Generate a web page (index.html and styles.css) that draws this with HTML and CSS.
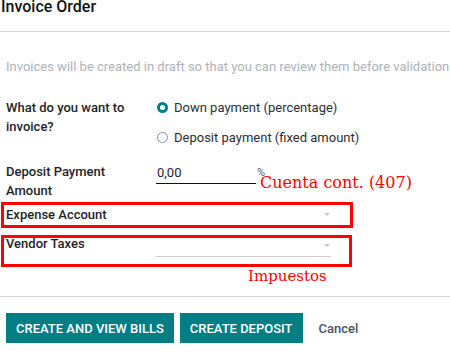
FILE: index.html
```html
<!DOCTYPE html>
<html lang="en">
<head>
  <meta charset="UTF-8" />
  <meta name="viewport" content="width=device-width, initial-scale=1.0" />
  <title>Invoice Order</title>
  <link rel="stylesheet" href="styles.css">
</head>
<body>
  <div class="dialog">
    <header class="head">
      <h4>Invoice Order</h4>
    </header>

    <div class="content">
      <p class="note">Invoices will be created in draft so that you can review them before validation</p>

      <div class="row row-method">
        <div class="label">What do you want to invoice?</div>
        <div class="value radios">
          <div class="radio checked"><span class="dot"></span>Down payment (percentage)</div>
          <div class="radio"><span class="dot"></span>Deposit payment (fixed amount)</div>
        </div>
      </div>

      <div class="row row-amount">
        <div class="label">Deposit Payment Amount</div>
        <div class="value">
          <div class="input amount">0,00</div>
          <span class="unit">%</span>
        </div>
      </div>

      <div class="row row-account">
        <div class="label">Expense Account</div>
        <div class="value">
          <div class="select plain"><span class="caret"></span></div>
        </div>
      </div>

      <div class="row row-taxes">
        <div class="label">Vendor Taxes</div>
        <div class="value">
          <div class="select lined"><span class="caret"></span></div>
        </div>
      </div>
    </div>

    <footer class="foot">
      <button class="btn primary">Create and View Bills</button>
      <button class="btn primary">Create Deposit</button>
      <button class="btn link">Cancel</button>
    </footer>

    <!-- annotations drawn over the screenshot -->
    <div class="mark box-account"></div>
    <div class="mark box-taxes"></div>
    <div class="note-red note-account">Cuenta cont. (407)</div>
    <div class="note-red note-taxes">Impuestos</div>
  </div>
</body>
</html>
```

FILE: styles.css
```css
body {
  margin: 0;
  font-family: 'Roboto', sans-serif;
  font-size: 13px;
  color: #212529;
  background: #fff;
}
.dialog {
  position: relative;
  width: 450px;
  height: 355px;
  overflow: hidden;
}
.head {
  display: flow-root;
  height: 31px;
  border-bottom: 1px solid #d5d8de;
}
.head h4 {
  margin: -3px 0 0 1px;
  font-size: 16px;
  font-weight: 500;
  line-height: 19px;
  color: #111;
}
.content {
  height: 239px;
  padding-top: 25px;
}
.note {
  margin: 0 0 22px 6px;
  line-height: 19px;
  color: #aeb2b8;
  white-space: nowrap;
}
.row {
  display: flex;
  line-height: 19px;
}
.label {
  box-sizing: border-box;
  width: 156px;
  padding: 0 16px 0 6px;
  font-weight: 500;
  color: #1f2328;
}
.value {
  display: flex;
  align-items: flex-start;
}
.radios {
  flex-direction: column;
  padding-left: 1px;
}
.radio {
  display: flex;
  align-items: center;
  margin-bottom: 11px;
  color: #2b2f33;
}
.radio:last-child {
  margin-bottom: 0;
}
.dot {
  box-sizing: border-box;
  width: 11px;
  height: 11px;
  margin-right: 6px;
  border: 1px solid #8a8f95;
  border-radius: 50%;
  background: #fff;
}
.radio.checked .dot {
  border: 3.5px solid #017e84;
}
.row-amount {
  margin-top: 15px;
}
.input {
  padding: 1px 0 1px 1px;
  line-height: 19px;
  border-bottom: 1px solid #111;
  color: #1f2328;
}
.amount {
  width: 99px;
}
.unit {
  margin-left: 1px;
  font-size: 11px;
  line-height: 12px;
  color: #555b66;
  padding-top: 5px;
}
.row-account {
  margin-top: 5px;
}
.row-taxes {
  margin-top: 10px;
}
.select {
  display: flex;
  justify-content: flex-end;
  align-items: center;
  width: 175px;
  height: 19px;
}
.select.lined {
  padding-bottom: 3px;
  border-bottom: 1px solid #c9ccd1;
}
.select.lined .caret {
  margin-bottom: -3px;
  align-self: center;
}
.caret {
  width: 0;
  height: 0;
  margin-right: 1px;
  border-left: 3px solid transparent;
  border-right: 3px solid transparent;
  border-top: 3px solid #c4c6ca;
}
.foot {
  display: flex;
  gap: 6px;
  padding: 16px 0 0 6px;
  border-top: 1px solid #d5d8de;
}
.btn {
  height: 30px;
  padding: 0 10px;
  border: none;
  border-radius: 0;
  font-family: 'Roboto', sans-serif;
  font-size: 13px;
  font-weight: 500;
  cursor: pointer;
}
.btn.primary {
  background: #017e84;
  color: #fff;
  text-transform: uppercase;
}
.btn.link {
  background: none;
  color: #4a5160;
}
.mark {
  position: absolute;
  border: 3px solid #ff0000;
  box-sizing: border-box;
}
.box-account {
  left: 1px;
  top: 202px;
  width: 352px;
  height: 26px;
}
.box-taxes {
  left: 1px;
  top: 235px;
  width: 351px;
  height: 32px;
}
.note-red {
  position: absolute;
  font-family: 'DejaVu Serif', serif;
  font-size: 16px;
  line-height: 16px;
  color: #ff0000;
  white-space: nowrap;
}
.note-account {
  left: 260px;
  top: 175px;
}
.note-taxes {
  left: 248px;
  top: 268px;
  font-size: 15px;
}
```
